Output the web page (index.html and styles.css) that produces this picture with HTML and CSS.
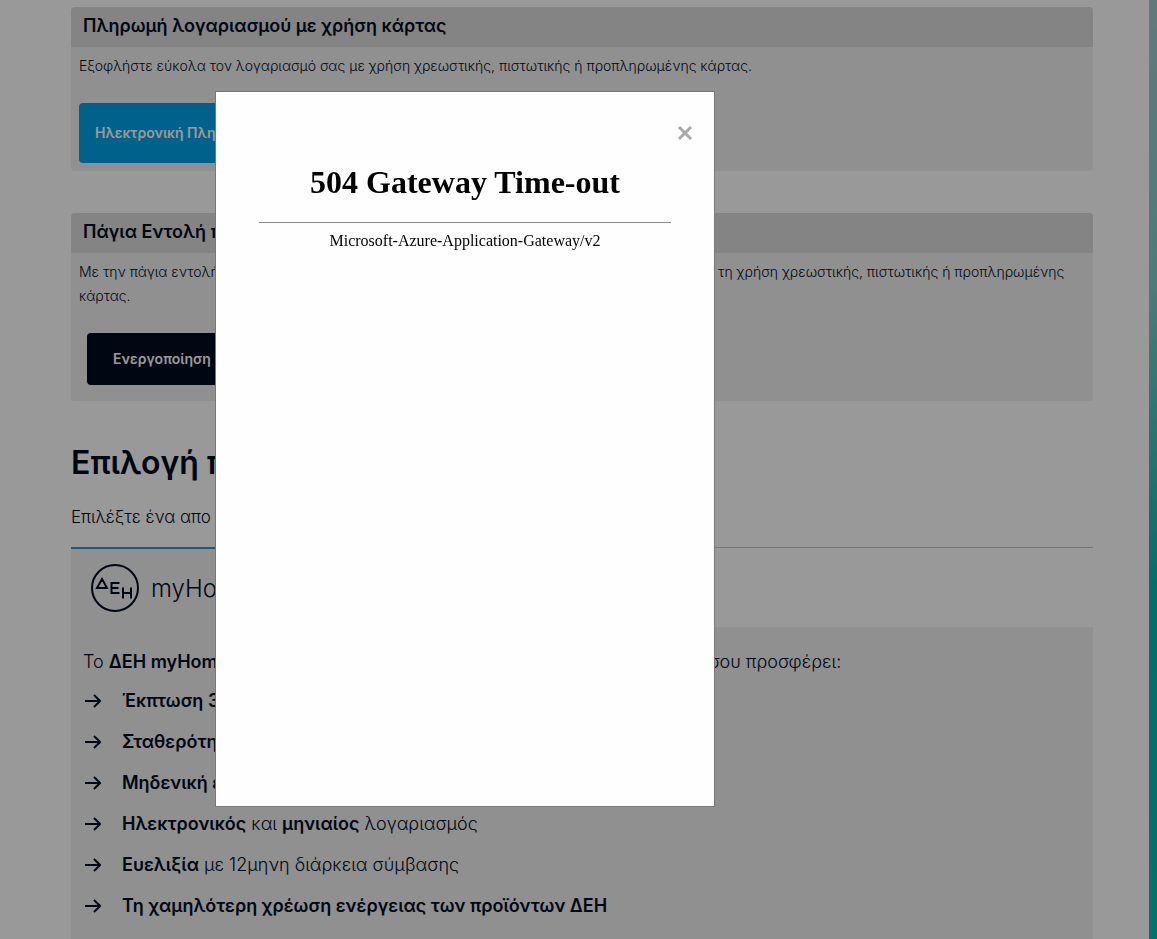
FILE: index.html
```html
<!DOCTYPE html>
<html lang="el">
<head>
<meta charset="utf-8">
<meta name="viewport" content="width=device-width, initial-scale=1">
<title>ΔΕΗ – Πληρωμή λογαριασμού</title>
<link rel="stylesheet" href="styles.css">
</head>
<body>
<svg class="defs" aria-hidden="true">
  <symbol id="arrow" viewBox="0 0 16 14"><path d="M0 7h14.500M9 1l6 6-6 6"/></symbol>
</svg>
<div class="page">
  <main class="content">
    <section class="card">
      <h2 class="card-title">Πληρωμή λογαριασμού με χρήση κάρτας</h2>
      <div class="card-body">
        <p class="card-text">Εξοφλήστε εύκολα τον λογαριασμό σας με χρήση χρεωστικής, πιστωτικής ή προπληρωμένης κάρτας.</p>
        <button class="btn btn-pay" type="button">Ηλεκτρονική Πληρωμή</button>
      </div>
    </section>
    <section class="card">
      <h2 class="card-title">Πάγια Εντολή πληρωμής</h2>
      <div class="card-body card-body-tall">
        <p class="card-text">Με την πάγια εντολή πληρώνετε τους λογαριασμούς σας αυτόματα και με ασφάλεια εύκολα με τη χρήση χρεωστικής, πιστωτικής ή προπληρωμένης κάρτας.</p>
        <button class="btn btn-activate" type="button">Ενεργοποίηση</button>
      </div>
    </section>
    <h1 class="heading">Επιλογή προϊόντος</h1>
    <p class="lead">Επιλέξτε ένα απο τα προϊόντα</p>
    <div class="tabs">
      <button class="tab" type="button">
        <svg class="logo" viewBox="0 0 50 50" aria-hidden="true">
          <circle cx="25" cy="25" r="23"/>
          <path d="M7 25L12 16l5 9zM29.500 20h-8v10h8M21.500 25h7M33 24.500v11M41 24.500v11M33 30h8"/>
        </svg>
        <span>myHome</span>
      </button>
    </div>
    <section class="panel">
      <p class="intro">Το <b>ΔΕΗ myHome Online</b> είναι ένα νέο ηλεκτρονικό προϊόν ρεύματος που σου προσφέρει:</p>
      <ul class="benefits">
        <li><svg class="arrow"><use href="#arrow"/></svg><span><b>Έκπτωση 30%</b></span></li>
        <li><svg class="arrow"><use href="#arrow"/></svg><span><b>Σταθερότητα</b></span></li>
        <li><svg class="arrow"><use href="#arrow"/></svg><span><b>Μηδενική εγγύηση</b></span></li>
        <li><svg class="arrow"><use href="#arrow"/></svg><span><b>Ηλεκτρονικός</b> και <b>μηνιαίος</b> λογαριασμός</span></li>
        <li><svg class="arrow"><use href="#arrow"/></svg><span><b>Ευελιξία</b> με 12μηνη διάρκεια σύμβασης</span></li>
        <li><svg class="arrow"><use href="#arrow"/></svg><span><b>Τη χαμηλότερη χρέωση ενέργειας των προϊόντων ΔΕΗ</b></span></li>
        <li><svg class="arrow"><use href="#arrow"/></svg><span>Πάγια έκπτωση συνέπειας για κάθε λογαριασμό που εξοφλείται εμπρόθεσμα μέσω πάγιας εντολής</span></li>
      </ul>
    </section>
  </main>
  <div class="strip"></div>
</div>
<div class="overlay">
  <div class="modal" role="dialog" aria-modal="true" aria-labelledby="error-title">
    <button class="close" type="button" aria-label="Κλείσιμο">
      <svg viewBox="0 0 16 16" aria-hidden="true"><path d="M2 2l12 12M14 2L2 14"/></svg>
    </button>
    <h1 class="error-title" id="error-title">504 Gateway Time-out</h1>
    <hr class="rule">
    <p class="error-source">Microsoft-Azure-Application-Gateway/v2</p>
  </div>
</div>
</body>
</html>
```
FILE: styles.css
```css
* { box-sizing: border-box; }

html, body { height: 100%; }

body {
  margin: 0;
  overflow: hidden;
  background: #fff;
  color: #000d1e;
  font-family: Inter, "Noto Sans", sans-serif;
}

h1, h2, p, ul { margin: 0; padding: 0; }
b { font-weight: 600; }
button { font: inherit; color: inherit; border: 0; cursor: pointer; }

.defs { display: none; }

.page { display: flex; height: 100vh; overflow: hidden; }

.content { flex: 1; padding: 7px 56px 0 71px; }

.strip {
  width: 8px;
  background: linear-gradient(#a6c9ce 0%, #84cbc9 30%, #22bbb2 56%, #00bcb0 62%, #00c1b1 100%);
}

.card {
  margin-bottom: 42px;
  overflow: hidden;
  border-radius: 4px;
  background: #f0f0f0;
}

.card-title {
  padding: 0 12px 2px;
  background: #dcdcdc;
  font-size: 18px;
  font-weight: 600;
  line-height: 38px;
}

.card-body { padding: 7px 8px 8px; }
.card-body-tall { padding-bottom: 16px; }

.card-text {
  margin-bottom: 25px;
  font-size: 14px;
  font-weight: 300;
  line-height: 24px;
}

.btn {
  display: block;
  border-radius: 4px;
  color: #fff;
  font-size: 14px;
  font-weight: 600;
}

.btn-pay { height: 60px; padding: 0 16px 2px; background: #00a2e6; }
.btn-activate { height: 52px; margin-left: 8px; padding: 0 26px 2px; background: #000d1e; }

.heading { font-size: 32px; font-weight: 600; line-height: 40px; }
.lead { margin: 22px 0 18px; font-size: 17px; font-weight: 300; line-height: 24px; }

.tabs { display: flex; border-top: 1px solid #c4c4c4; }

.tab {
  display: flex;
  align-items: center;
  gap: 11px;
  width: 320px;
  height: 80px;
  margin-top: -1px;
  padding: 0 19px;
  border-top: 2px solid #3f93c4;
  background: #f0f0f0;
  font-size: 24px;
  font-weight: 300;
}

.logo { width: 50px; height: 50px; fill: none; stroke: #000d1e; stroke-width: 2; }

.panel {
  padding: 23px 12px;
  background: #f0f0f0;
  font-size: 18px;
  font-weight: 300;
  line-height: 24px;
}

.benefits { margin-top: 15px; list-style: none; }
.benefits li { display: flex; align-items: center; gap: 21px; margin-bottom: 17px; padding-left: 2px; }
.arrow { width: 16px; height: 14px; fill: none; stroke: #000d1e; stroke-width: 2; }

.overlay {
  position: fixed;
  inset: 0;
  padding: 92px 0 0 216px;
  background: rgba(0, 0, 0, 0.4);
}

.modal {
  display: flex;
  flex-direction: column;
  width: 53%;
  max-width: 498px;
  height: 76vh;
  padding: 32px 43px;
  outline: 1px solid #777;
  background: #fefefe;
  color: #000;
  font-family: "Liberation Serif", serif;
  text-align: center;
}

.close {
  display: flex;
  align-self: flex-end;
  margin-right: -23px;
  padding: 1px;
  background: none;
}

.close svg { width: 16px; height: 16px; fill: none; stroke: #a9a9ab; stroke-width: 3; }

.error-title { margin-top: 20px; font-size: 32px; line-height: 40px; }
.rule { width: 100%; margin: 20px 0 8px; border: 0; border-top: 1px solid #8c8c8c; }
.error-source { font-size: 16px; line-height: 20px; }
```
